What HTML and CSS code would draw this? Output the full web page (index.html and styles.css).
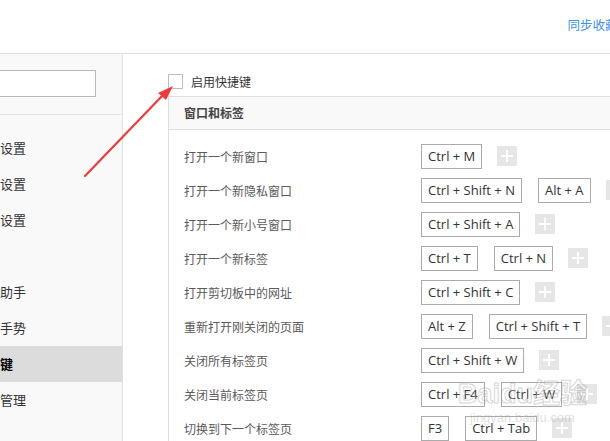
FILE: index.html
```html
<!DOCTYPE html>
<html lang="zh-CN">
<head>
<meta charset="utf-8">
<title>快捷键设置</title>
<link rel="stylesheet" href="styles.css">
</head>
<body>
<div class="page">
  <header class="topbar">
    <a class="sync" href="#">同步收藏夹</a>
  </header>
  <div class="main">
    <aside class="sidebar">
      <div class="search-area">
        <div class="search"></div>
      </div>
      <ul class="nav">
        <li>基本设置</li>
        <li>界面设置</li>
        <li>标签设置</li>
        <li>优化</li>
        <li>翻译助手</li>
        <li>鼠标手势</li>
        <li class="active">快捷键</li>
        <li>下载管理</li>
        <li>高级</li>
      </ul>
    </aside>
    <section class="content">
      <div class="enable">
        <span class="checkbox"></span>
        <span class="enable-label">启用快捷键</span>
      </div>
      <div class="panel">
        <div class="panel-head">窗口和标签</div>
        <div class="rows">
          <div class="row"><span class="label">打开一个新窗口</span><span class="key">Ctrl + M</span><span class="add"></span></div>
          <div class="row"><span class="label">打开一个新隐私窗口</span><span class="key">Ctrl + Shift + N</span><span class="key">Alt + A</span><span class="add"></span></div>
          <div class="row"><span class="label">打开一个新小号窗口</span><span class="key">Ctrl + Shift + A</span><span class="add"></span></div>
          <div class="row"><span class="label">打开一个新标签</span><span class="key">Ctrl + T</span><span class="key">Ctrl + N</span><span class="add"></span></div>
          <div class="row"><span class="label">打开剪切板中的网址</span><span class="key">Ctrl + Shift + C</span><span class="add"></span></div>
          <div class="row"><span class="label">重新打开刚关闭的页面</span><span class="key">Alt + Z</span><span class="key">Ctrl + Shift + T</span><span class="add"></span></div>
          <div class="row"><span class="label">关闭所有标签页</span><span class="key">Ctrl + Shift + W</span><span class="add"></span></div>
          <div class="row"><span class="label">关闭当前标签页</span><span class="key">Ctrl + F4</span><span class="key">Ctrl + W</span><span class="add"></span></div>
          <div class="row"><span class="label">切换到下一个标签页</span><span class="key">F3</span><span class="key">Ctrl + Tab</span><span class="add"></span></div>
        </div>
      </div>
    </section>
  </div>
  <svg class="arrow" width="610" height="441" viewBox="0 0 610 441">
    <line x1="85" y1="176" x2="164" y2="94" stroke="#f03a3a" stroke-width="2.2" stroke-linecap="round"/>
    <polygon points="173,86 158,93 166,100" fill="#f03a3a"/>
  </svg>
  <div class="watermark">
    <div class="wm-big">Baidu经验</div>
    <div class="wm-small">jingyan.baidu.com</div>
  </div>
</div>
</body>
</html>
```
FILE: styles.css
```css
* { box-sizing: border-box; }
html, body { margin: 0; padding: 0; }
body {
  width: 610px;
  height: 441px;
  overflow: hidden;
  background: #fff;
  font-family: "Noto Sans", "Noto Sans CJK SC", sans-serif;
  color: #333;
}
.page {
  position: relative;
  width: 610px;
  height: 441px;
  overflow: hidden;
  display: flex;
  flex-direction: column;
}
.topbar {
  height: 54px;
  border-bottom: 1px solid #dcdcdc;
  display: flex;
  justify-content: flex-end;
  align-items: flex-start;
  flex-shrink: 0;
}
.sync {
  margin-top: 15px;
  margin-right: -20px;
  font-size: 12.5px;
  color: #3d8fe8;
  text-decoration: none;
  white-space: nowrap;
  font-family: "Noto Sans CJK SC", sans-serif;
}
.main {
  flex: 1;
  display: flex;
  min-height: 0;
}
.sidebar {
  width: 123px;
  flex-shrink: 0;
  background: #f9f9f9;
  border-right: 1px solid #e2e2e2;
}
.search-area {
  height: 61px;
  padding-top: 16px;
  border-bottom: 1px solid #e4e4e4;
}
.search {
  margin-left: -60px;
  width: 156px;
  height: 27px;
  background: #fff;
  border: 1px solid #b9b9b9;
}
.nav {
  list-style: none;
  margin: 0;
  padding: 15px 0 0 0;
}
.nav li {
  height: 36px;
  line-height: 36px;
  text-indent: -26px;
  font-size: 13px;
  color: #333;
  white-space: nowrap;
  font-family: "Noto Sans CJK SC", sans-serif;
}
.nav li.active {
  background: #dcdcdc;
  color: #000;
  font-weight: bold;
}
.content {
  flex: 1;
  padding: 20px 0 0 45px;
  min-width: 0;
}
.enable {
  display: flex;
  align-items: center;
  height: 15px;
  margin-bottom: 7px;
}
.checkbox {
  width: 15px;
  height: 15px;
  border: 1px solid #bdbdbd;
  background: #fff;
  flex-shrink: 0;
}
.enable-label {
  margin-left: 8px;
  font-size: 12px;
  color: #333;
  font-family: "Noto Sans CJK SC", sans-serif;
}
.panel {
  border-top: 1px solid #dedede;
  border-left: 1px solid #dedede;
  width: 500px;
  height: 400px;
}
.panel-head {
  height: 33px;
  line-height: 32px;
  background: #f9f9f9;
  border-bottom: 1px solid #dedede;
  padding-left: 15px;
  font-size: 12px;
  font-weight: bold;
  color: #444;
  font-family: "Noto Sans CJK SC", sans-serif;
}
.rows {
  padding-top: 9px;
}
.row {
  height: 34px;
  display: flex;
  align-items: center;
  padding-left: 15px;
  white-space: nowrap;
}
.label {
  width: 237px;
  flex-shrink: 0;
  font-size: 12px;
  color: #5a5a5a;
  font-family: "Noto Sans CJK SC", sans-serif;
}
.key {
  height: 25px;
  line-height: 23px;
  padding: 0 6px;
  border: 1px solid #ababab;
  font-size: 13px;
  color: #333;
  margin-right: 16px;
  flex-shrink: 0;
  font-family: "Open Sans", "Noto Sans", sans-serif;
}
.add {
  width: 20px;
  height: 20px;
  background: #e6e6e6;
  position: relative;
  flex-shrink: 0;
  margin-left: -1px;
}
.add::before,
.add::after {
  content: "";
  position: absolute;
  background: #fff;
}
.add::before {
  left: 4px;
  top: 9px;
  width: 12px;
  height: 2px;
}
.add::after {
  left: 9px;
  top: 4px;
  width: 2px;
  height: 12px;
}
.arrow {
  position: absolute;
  left: 0;
  top: 0;
  pointer-events: none;
}
.watermark {
  position: absolute;
  left: 458px;
  top: 378px;
  pointer-events: none;
  opacity: 0.3;
  text-align: center;
  white-space: nowrap;
  font-family: "Liberation Sans", "Noto Sans CJK SC", sans-serif;
}
.wm-big {
  font-size: 27px;
  font-weight: bold;
  line-height: 32px;
  color: #fff;
  -webkit-text-stroke: 1px #777;
}
.wm-small {
  font-size: 13px;
  line-height: 16px;
  color: #999;
}
```
